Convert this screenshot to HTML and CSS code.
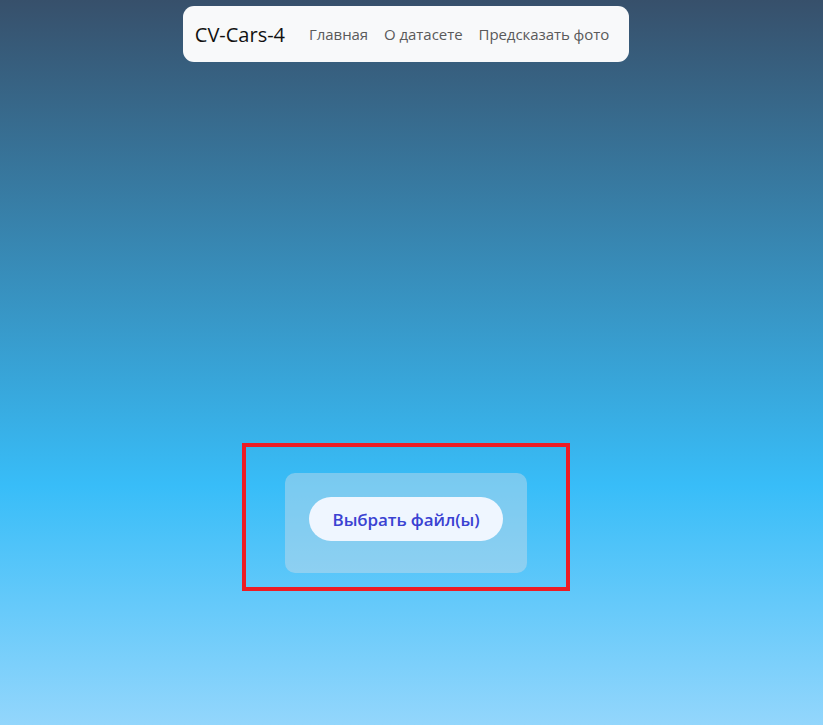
FILE: index.html
```html
<!DOCTYPE html>
<html lang="ru">
<head>
<meta charset="utf-8">
<title>CV-Cars-4</title>
<link rel="stylesheet" href="styles.css">
</head>
<body>
<div class="page">
  <nav class="navbar">
    <a class="brand" href="#">CV-Cars-4</a>
    <ul class="nav">
      <li><a class="nav-link" href="#">Главная</a></li>
      <li><a class="nav-link" href="#">О датасете</a></li>
      <li><a class="nav-link" href="#">Предсказать фото</a></li>
    </ul>
  </nav>
  <main class="main">
    <div class="highlight">
      <div class="panel">
        <button class="upload-btn" type="button">Выбрать файл(ы)</button>
      </div>
    </div>
  </main>
</div>
</body>
</html>
```
FILE: styles.css
```css
html, body {
  margin: 0;
  padding: 0;
  height: 100%;
}
body {
  background: linear-gradient(to bottom, #37506b 0%, #38bdf8 67%, #93d6fc 100%);
  font-family: "Open Sans", "Noto Sans", sans-serif;
  overflow: hidden;
}
.page {
  width: 812px;
  height: 725px;
  display: flex;
  flex-direction: column;
  align-items: center;
}
.navbar {
  margin-top: 6px;
  height: 56px;
  box-sizing: border-box;
  padding: 0 12px;
  background: #f8f9fa;
  border-radius: 11px;
  display: flex;
  align-items: center;
  white-space: nowrap;
}
.brand {
  flex-shrink: 0;
  font-size: 20px;
  color: #111;
  text-decoration: none;
  margin-right: 16px;
}
.nav {
  list-style: none;
  margin: 0;
  padding: 0;
  display: flex;
  flex-shrink: 0;
}
.nav-link {
  display: block;
  padding: 8px;
  font-size: 15px;
  color: #5a5a5a;
  text-decoration: none;
  letter-spacing: -0.06px;
}
.main {
  flex: 1;
  display: flex;
  justify-content: center;
  padding-top: 381px;
}
.highlight {
  width: 328px;
  height: 148px;
  box-sizing: border-box;
  border: 4px solid #ed1c24;
  display: flex;
  justify-content: center;
  align-items: flex-start;
  padding-top: 26px;
}
.panel {
  width: 242px;
  height: 100px;
  box-sizing: border-box;
  border-radius: 10px;
  background: rgba(215, 222, 232, 0.42);
  padding-top: 24px;
  display: flex;
  justify-content: center;
  align-items: flex-start;
}
.upload-btn {
  width: 194px;
  height: 44px;
  border: none;
  border-radius: 22px;
  background: #eff6ff;
  color: #3a42d2;
  font-family: "Open Sans", "Noto Sans", sans-serif;
  font-weight: 600;
  font-size: 17px;
  letter-spacing: -0.1px;
  cursor: pointer;
}
```
